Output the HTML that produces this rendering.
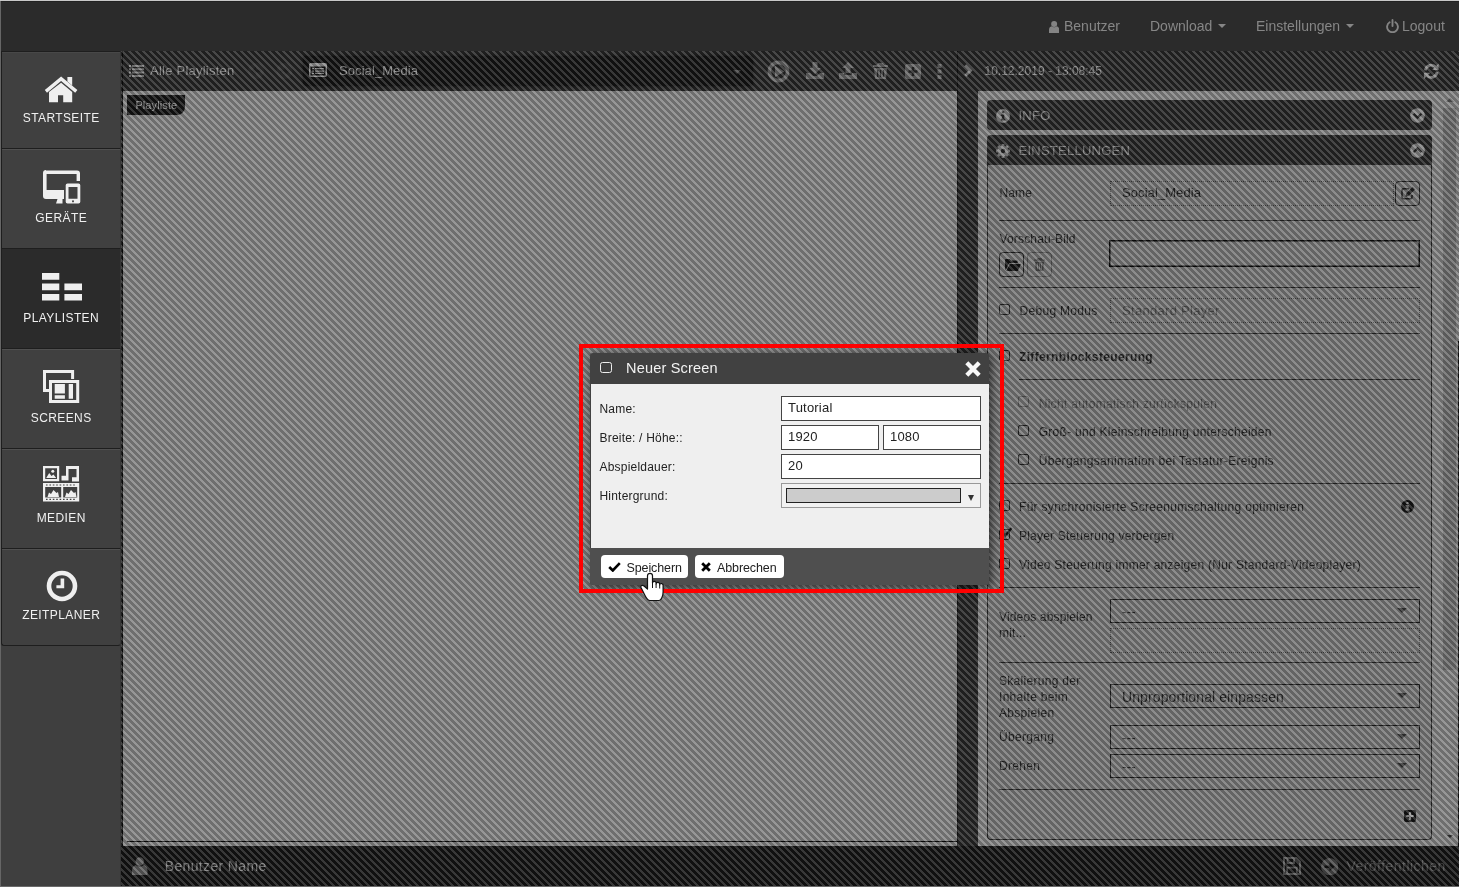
<!DOCTYPE html>
<html lang="de">
<head>
<meta charset="utf-8">
<title>Playlisten</title>
<style>
*{box-sizing:border-box;margin:0;padding:0}
html,body{width:1459px;height:887px;overflow:hidden}
body{position:relative;background:#2b2b2b;font-family:"Liberation Sans",sans-serif;font-size:13px;color:#222}
.abs{position:absolute}
#nav .it,.tile span,#dlg,#tb,#ptag,#bb,#rp{will-change:transform}
svg{display:block}
/* ---------- navbar ---------- */
#nav{position:absolute;left:0;top:0;width:1459px;height:51px;background:#2b2b2b;border-top:1px solid #c8c8c8;box-shadow:inset 0 1px 0 #222}
#nav .it{position:absolute;top:17px;font-size:14px;line-height:16px;color:#868686;white-space:nowrap}
#nav .car{display:inline-block;width:0;height:0;border-left:4px solid transparent;border-right:4px solid transparent;border-top:4px solid #868686;vertical-align:middle;margin-left:6px;position:relative;top:-1px}
/* ---------- sidebar ---------- */
#side{position:absolute;left:0;top:51px;width:121px;height:836px;background:#3f3f3f;border-left:1px solid #666;border-bottom:1px solid #666;border-right:1px solid #363636}
.tile{position:absolute;left:0;width:120px;height:100px;background:#404040;border-left:1px solid #1e1e1e;border-right:1px solid #363636;border-bottom:1px solid #1e1e1e;box-shadow:inset 0 1px 0 #505050;color:#f0f0f0;font-size:12px;letter-spacing:.4px}
.tile.act{background:#2b2b2b;box-shadow:none}
.tile span{position:absolute;left:0;right:0;text-align:center;top:61px;line-height:16px;text-indent:.4px}
.tile svg{position:absolute}
/* ---------- main ---------- */
#main{position:absolute;left:121px;top:51px;width:1338px;height:835px;background:#2e2e2e;overflow:hidden}
#hatch{position:absolute;left:121px;top:51px;z-index:50}
</style>
</head>
<body>
<div id="nav">
  <svg class="abs" style="left:1049px;top:20px" width="10.300" height="12" viewBox="0 0 11 13" preserveAspectRatio="none"><circle cx="5.500" cy="3.300" r="3.200" fill="#848484"/><path fill="#848484" d="M0 13V9.500C0 7.300 1.300 6 2.800 5.700c.7.700 1.700 1.100 2.700 1.100s2-.4 2.700-1.100C9.700 6 11 7.300 11 9.500V13z"/></svg>
  <div class="it" style="left:1063.500px">Benutzer</div>
  <div class="it" style="left:1149.500px">Download<i class="car"></i></div>
  <div class="it" style="left:1255.500px">Einstellungen<i class="car"></i></div>
  <svg class="abs" style="left:1386px;top:18px" width="13" height="14" viewBox="0 0 13 14"><path fill="none" stroke="#848484" stroke-width="1.900" stroke-linecap="round" d="M3.600 3.300A5.400 5.400 0 1 0 9.400 3.300M6.500 1v6"/></svg>
  <div class="it" style="left:1401.500px">Logout</div>
</div>

<div id="side">
  <div class="tile" style="top:0;height:98px;border-top:1px solid #1e1e1e;box-shadow:inset 0 1px 0 #484848"><span style="top:58px">STARTSEITE</span>
    <svg style="left:43px;top:24px;overflow:visible" width="33" height="27" viewBox="0 0 33 27"><g fill="#efefef"><path d="M16.100 .6L32.400 14.100l-2.200 2.600L16.100 5 2 16.700-.2 14.100z"/><path d="M22.400 1.100h4.800v8.400l-4.800-4z"/><path d="M16.100 6.700L27.200 15.900V26.200H18.200V19.200H13V26.200H4V15.900z"/></g></svg>
  </div>
  <div class="tile" style="top:98px"><span>GERÄTE</span>
    <svg style="left:39.500px;top:21px" width="40" height="34" viewBox="0 0 40 34"><path fill="#efefef" fill-rule="evenodd" d="M4 .5h31a3 3 0 0 1 3 3V11h-3.400V4H4.600v16H22v9h-1.500v4.500H14l1.500-4.500H4a3 3 0 0 1-3-3v-23a3 3 0 0 1 3-3z"/><path fill="#efefef" fill-rule="evenodd" d="M25.500 13.500h11a1.800 1.800 0 0 1 1.800 1.800v16.500a1.800 1.800 0 0 1-1.800 1.800h-11a1.800 1.800 0 0 1-1.800-1.800V15.300a1.800 1.800 0 0 1 1.800-1.800zM26.500 17v11.800h9V17zM31 30.200a1 1 0 1 0 .01 0z"/></svg>
  </div>
  <div class="tile act" style="top:198px"><span>PLAYLISTEN</span>
    <svg style="left:40px;top:24px" width="41" height="28" viewBox="0 0 41 28"><path fill="#efefef" d="M0 0h17.300v6.700H0zM0 10.500h17.300v6.700H0zM0 21h17.300v6.500H0zM22.400 10.500H40v6.700H22.400zM22.400 21H40v6.500H22.400z"/></svg>
  </div>
  <div class="tile" style="top:298px"><span>SCREENS</span>
    <svg style="left:41px;top:21px" width="38" height="34" viewBox="0 0 38 34"><g fill="none" stroke="#efefef" stroke-width="3"><path d="M29.600 9V1.500H1.500v19H6"/><rect x="7.500" y="11.500" width="27.200" height="20"/></g><path fill="#efefef" d="M11.700 14h10.200v9.400H11.700zM11.700 25.200h10.200v3.600H11.700zM25.700 14H30v14.800h-4.300z"/></svg>
  </div>
  <div class="tile" style="top:398px"><span>MEDIEN</span>
    <svg style="left:41px;top:17px" width="37" height="36" viewBox="0 0 37 36"><g fill="#efefef"><path fill-rule="evenodd" d="M0 0h16.200v15.300H0zM2.200 2.200v10.900H14V2.200z"/><path d="M3.200 12l3-5 2.300 3 2-1.500 2.700 3.500z"/><circle cx="9.800" cy="5.200" r="1.500"/><path d="M23 0h13v15.500h-7v-4.300h4.500V3H25.500v8.200h0V14.500h-7V9.700H23z"/><path fill-rule="evenodd" d="M0 17h36.200v18.500H0zM2.200 21v10.500h16V21zM20.200 21v10.500h14V21z"/><path d="M4.500 31l1.500-4.500 2 1.500 2.500-4 3 3 1.500-1 1 5zM22 31l1.500-4.500 2 1.500 2.500-4 3 3 1.500-1 1 5z"/></g><g fill="#404040"><path d="M3 18.400h1.600v1.200H3zM6.400 18.400H8v1.200H6.400zM9.800 18.400h1.600v1.200H9.800zM13.200 18.400h1.600v1.200h-1.600zM16.600 18.400h1.600v1.200h-1.600zM20 18.400h1.600v1.200H20zM23.400 18.400H25v1.200h-1.600zM26.800 18.400h1.600v1.200h-1.600zM30.200 18.400h1.600v1.200h-1.600zM3 32.800h1.600V34H3zM6.400 32.800H8V34H6.400zM9.800 32.800h1.600V34H9.800zM13.200 32.800h1.600V34h-1.600zM16.600 32.800h1.600V34h-1.600zM20 32.800h1.600V34H20zM23.400 32.800H25V34h-1.600zM26.800 32.800h1.600V34h-1.600zM30.200 32.800h1.600V34h-1.600z"/></g></svg>
  </div>
  <div class="tile" style="top:498px;height:97px;border-radius:0 0 3px 3px"><span style="top:58px">ZEITPLANER</span>
    <svg style="left:44px;top:21px" width="32" height="32" viewBox="0 0 32 32"><circle cx="16" cy="16" r="13" fill="none" stroke="#efefef" stroke-width="4.600"/><path fill="#efefef" d="M14.600 8.400h3.600v9.900H10.400v-3.100h4.200z"/></svg>
  </div>
</div>

<div id="main">

<style>
#tb{z-index:3;position:absolute;left:0;top:0;width:1338px;height:40px;color:#d6d6d6;font-size:13px}
#tb .t{position:absolute;white-space:nowrap;line-height:16px}
#sel{position:absolute;left:182px;top:5px;width:450px;height:30px;background:#111;border-radius:3px;box-shadow:0 0 2px 1px #1c1c1c}
#canvas{position:absolute;left:1px;top:40px;width:836px;height:755px;background:#ccc;border-left:1px solid #000}
#ptag{position:absolute;left:6px;top:44px;width:58px;height:20px;background:#111;border-bottom-right-radius:8px;color:#e4e4e4;font-size:11px;line-height:20px;padding-left:8.400px;letter-spacing:.1px}
#divd{position:absolute;left:836px;top:0;width:21px;height:795px;background:#2e2e2e;border-left:1px solid #0c0c0c}
#bb{position:absolute;left:0;top:795px;width:1338px;height:40px;background:#111;color:#aaa}
#rp{position:absolute;left:857px;top:40px;width:481px;height:755px;background:#cdcdcd}
</style>
<div id="canvas"><div class="abs" style="left:4px;top:750px;width:840px;height:1px;background:#000"></div></div>
<div id="ptag">Playliste</div>
<div id="tb">
  <svg class="abs" style="left:8px;top:14px" width="15" height="12" viewBox="0 0 15 12"><path fill="#c4c4c4" d="M0 0h2v2H0zM3 0h12v2H3zM0 3.3h2v2H0zM3 3.3h12v2H3zM0 6.6h2v2H0zM3 6.6h12v2H3zM0 9.9h2v2H0zM3 9.9h12v2H3z"/></svg>
  <div class="t" style="left:29px;top:12px;letter-spacing:.24px">Alle Playlisten</div>
  <svg class="abs" style="left:126px;top:12px" width="46" height="16" viewBox="0 0 46 16"><g fill="#3d3d3d"><circle cx="9" cy="8" r="8"/><circle cx="37.500" cy="8" r="8"/></g><path fill="#2a2a2a" d="M13.500 6.800H9V3.800L4.200 8 9 12.200V9.200h4.500zM33 6.800h4.500V3.800L42.300 8l-4.800 4.200V9.200H33z"/></svg>
  <div id="sel">
    <svg class="abs" style="left:6px;top:7px" width="18" height="14" viewBox="0 0 18 14"><rect x=".75" y=".75" width="16.5" height="12.5" rx="1" fill="none" stroke="#ddd" stroke-width="1.5"/><path fill="#ddd" d="M1 1h16v2.5H1zM3 5h2v1.3H3zM6 5h9v1.3H6zM3 7.4h2v1.3H3zM6 7.4h9v1.3H6zM3 9.8h2v1.3H3zM6 9.8h9v1.3H6z"/></svg>
    <div class="t" style="left:36px;top:7px;letter-spacing:.08px">Social_Media</div>
    <div class="abs" style="left:430px;top:14px;border-left:4px solid transparent;border-right:4px solid transparent;border-top:4px solid #666"></div>
  </div>
  <!-- action icons -->
  <svg class="abs" style="left:646px;top:9px" width="23" height="23" viewBox="0 0 23 23"><circle cx="11.500" cy="11.500" r="9.100" fill="none" stroke="#999" stroke-width="3.600"/><path fill="#999" d="M8 5.800l9.300 5.700L8 17.200z"/></svg>
  <svg class="abs" style="left:685px;top:11px" width="18" height="17" viewBox="0 0 18 17"><path fill="#999" d="M6.5 0h5v6h3.5L9 12 3 6h3.5zM0 11h4l3 3h4l3-3h4v6H0z"/></svg>
  <svg class="abs" style="left:718px;top:11px" width="18" height="17" viewBox="0 0 18 17"><path fill="#999" d="M9 0l6 6h-3.5v5h-5V6H3zM0 11h5v2h8v-2h5v6H0z"/></svg>
  <svg class="abs" style="left:752px;top:12px" width="15" height="16" viewBox="0 0 15 16"><path fill="#999" d="M5 0h5l1 2h4v2H0V2h4zM1 5h13l-1 11H2zM4 7v7h1.3V7zM6.9 7v7h1.3V7zM9.8 7v7h1.3V7z" fill-rule="evenodd"/></svg>
  <svg class="abs" style="left:784px;top:13px" width="16" height="15" viewBox="0 0 16 15"><path fill="#999" fill-rule="evenodd" d="M2.5 0h11A2.5 2.5 0 0 1 16 2.500v10a2.500 2.500 0 0 1-2.500 2.500h-11A2.500 2.500 0 0 1 0 12.500v-10A2.500 2.500 0 0 1 2.500 0zM6.700 3v3.200H3.500v2.600h3.200V12h2.600V8.800h3.200V6.200H9.300V3z"/></svg>
  <svg class="abs" style="left:816px;top:13px" width="5" height="15" viewBox="0 0 5 15"><path fill="#999" d="M.5 0h4v4h-4zM.5 5.500h4v4h-4zM.5 11h4v4h-4z"/></svg>
  <svg class="abs" style="left:842.500px;top:13px" width="9" height="13" viewBox="0 0 9 13"><path fill="none" stroke="#c8c8c8" stroke-width="2.800" d="M1.300 1.200l5.300 5.300L1.300 11.800"/></svg>
  <div class="t" style="left:863.500px;top:11.500px;font-size:12px;color:#d4d4d4;letter-spacing:0">10.12.2019 - 13:08:45</div>
  <svg class="abs" style="left:1302px;top:11.500px" width="16.500" height="16.500" viewBox="0 0 18 18"><g fill="none" stroke="#d8d8d8" stroke-width="3"><path d="M2.600 8A6.500 6.500 0 0 1 14 4.600"/><path d="M15.400 10A6.500 6.500 0 0 1 4 13.400"/></g><path fill="#d8d8d8" d="M17 .5v7h-7zM1 17.500v-7h7z"/></svg>
</div>
<div id="divd"></div>
<div class="abs" style="left:1px;top:0;width:1px;height:795px;background:#000;z-index:4"></div>
<div id="bb">
  <svg class="abs" style="left:11px;top:11px" width="15.500" height="18" viewBox="0 0 16 18" preserveAspectRatio="none"><circle cx="8" cy="4.500" r="4.300" fill="#8a8a8a"/><path fill="#8a8a8a" d="M0 18v-4.500c0-3 2-5 4-5.500 1 1 2.500 1.500 4 1.500s3-.5 4-1.500c2 .5 4 2.500 4 5.500V18z"/></svg>
  <div class="abs" style="left:43.700px;top:10.500px;font-size:14px;line-height:18px;color:#c0c0c0;letter-spacing:.36px;white-space:nowrap">Benutzer Name</div>
  <svg class="abs" style="left:1162px;top:11px" width="18" height="18" viewBox="0 0 18 18"><path fill="none" stroke="#808080" stroke-width="2" d="M1 1h12.300L17 4.700V17H1z"/><path fill="none" stroke="#808080" stroke-width="1.800" d="M4.500 1v5h6.500V1M4.200 17v-6.300h9.600V17"/></svg>
  <svg class="abs" style="left:1199.500px;top:11.500px" width="17.500" height="17.500" viewBox="0 0 18 18"><circle cx="9" cy="9" r="9" fill="#6a6a6a"/><path fill="#111" d="M3.500 7.600h5.300V4.300L14 9l-5.200 4.700v-3.300H3.500z"/></svg>
  <div class="abs" style="left:1225.400px;top:10.500px;font-size:14px;line-height:18px;color:#6a6a6a;letter-spacing:.47px;white-space:nowrap">Veröffentlichen</div>
</div>
<div id="rp">

<style>
#rp{font-size:12px;color:#222}
#rp .hd{position:absolute;left:9px;width:445px;height:30px;background:#2e2e2e;border-radius:4px;color:#c2c2c2;font-size:13px}
#rp .hd b{position:absolute;left:31.500px;top:7.500px;line-height:16px;font-weight:normal;letter-spacing:.25px;white-space:nowrap}
#pbody{position:absolute;left:9px;top:74px;width:445px;height:675px;border:1px solid #2a2a2a;border-top:0;border-radius:0 0 4px 4px;background:#b8b8b8}
#rp .l{position:absolute;white-space:nowrap;line-height:16px;letter-spacing:.3px}
#rp .hr{position:absolute;height:1px;background:#2a2a2a;left:21px;width:421px}
#rp .cb{position:absolute;width:11px;height:11px;border:1px solid #222;border-radius:2px}
#rp .dot{position:absolute;border:1px dotted #555;left:132px;width:310px;height:25px}
#rp .sb{position:absolute;border:1px solid #1a1a1a;left:132px;width:310px;height:24px}
#rp .sb i{position:absolute;right:12px;top:8px;border-left:5px solid transparent;border-right:5px solid transparent;border-top:5px solid #444}
#rp .v{position:absolute;left:144px;font-size:13px;line-height:16px;white-space:nowrap;letter-spacing:.3px}
#rp .btn{position:absolute;width:25px;height:25px;border:1px solid #222;border-radius:4px}
#sbar{position:absolute;left:465px;top:0;width:16px;height:755px}
#sbar u{position:absolute;left:0;top:17px;width:13px;height:562px;background:#a4a4a4}
</style>
<div class="hd" style="top:9px">
  <svg class="abs" style="left:9px;top:9px" width="14" height="14" viewBox="0 0 14 14"><circle cx="7" cy="7" r="7" fill="#ccc"/><path fill="#2e2e2e" d="M5.800 2.200h2.400v2.100H5.800zM4.900 5.500h3.400v4.300h1v1.600H4.900V9.800h1V7.100h-1z"/></svg>
  <b>INFO</b>
  <svg class="abs" style="left:423px;top:8px" width="15" height="15" viewBox="0 0 15 15"><circle cx="7.500" cy="7.500" r="7.300" fill="#ccc"/><path fill="none" stroke="#2e2e2e" stroke-width="2.200" d="M3.600 5.700l3.900 3.900 3.900-3.900"/></svg>
</div>
<div class="hd" style="top:44px;height:31px;border-radius:4px 4px 0 0">
  <svg class="abs" style="left:9px;top:9px" width="14" height="14" viewBox="0 0 14 14"><g fill="#ccc"><circle cx="7" cy="7" r="5.200"/><rect x="5.600" y="0" width="2.800" height="14" rx=".6"/><rect x="5.600" y="0" width="2.800" height="14" rx=".6" transform="rotate(45 7 7)"/><rect x="5.600" y="0" width="2.800" height="14" rx=".6" transform="rotate(90 7 7)"/><rect x="5.600" y="0" width="2.800" height="14" rx=".6" transform="rotate(135 7 7)"/></g><circle cx="7" cy="7" r="2.200" fill="#2e2e2e"/></svg>
  <b>EINSTELLUNGEN</b>
  <svg class="abs" style="left:423px;top:8px" width="15" height="15" viewBox="0 0 15 15"><circle cx="7.500" cy="7.500" r="7.300" fill="#ccc"/><path fill="none" stroke="#2e2e2e" stroke-width="2.200" d="M3.600 9.300l3.900-3.900 3.900 3.900"/></svg>
</div>
<div id="pbody"></div>

<div class="l" style="left:21.500px;top:93.500px;letter-spacing:.1px">Name</div>
<div class="dot" style="top:90px;width:284px"></div>
<div class="v" style="top:94px;letter-spacing:.08px">Social_Media</div>
<div class="btn" style="left:417px;top:90px"><svg class="abs" style="left:5px;top:5px" width="14" height="13" viewBox="0 0 14 13"><path fill="none" stroke="#222" stroke-width="1.500" d="M8 1.800H2.500a1.500 1.500 0 0 0-1.500 1.500v7a1.500 1.500 0 0 0 1.500 1.500h7a1.500 1.500 0 0 0 1.500-1.500V8"/><path fill="#222" d="M11.500 0L14 2.500 7.500 9 4.500 9.800 5.200 6.500z"/></svg></div>
<div class="hr" style="top:129px"></div>

<div class="l" style="left:21.500px;top:140px;letter-spacing:.16px">Vorschau-Bild</div>
<div class="btn" style="left:21px;top:161px;width:25px;height:25px"><svg class="abs" style="left:5px;top:6px" width="16" height="12" viewBox="0 0 16 12"><path fill="#111" d="M0 1.200C0 .5.500 0 1.200 0h3.600l1.400 1.600h5.300c.7 0 1.200.5 1.200 1.200V4H4.300L1 10.500 0 10.800zM4.800 5H16l-3.200 7H1.200z"/></svg></div>
<div class="btn" style="left:49px;top:161px;width:25px;height:25px;border-color:#777"><svg class="abs" style="left:6px;top:5px" width="11" height="13" viewBox="0 0 11 13"><path fill="#666" fill-rule="evenodd" d="M3.500 0h4l.8 1.500H11v1.300H0V1.500h2.700zM1 3.800h9L9.300 13H1.700zM3 5.300v6h1v-6zM5 5.300v6h1v-6zM7 5.300v6h1v-6z"/></svg></div>
<div class="abs" style="left:131px;top:149px;width:311px;height:27px;border:1px solid #000;box-shadow:inset 0 0 0 .5px #000"></div>
<div class="hr" style="top:196px"></div>

<div class="cb" style="left:21px;top:213px"></div>
<div class="l" style="left:41.500px;top:211.500px">Debug Modus</div>
<div class="dot" style="top:207px"></div>
<div class="v" style="top:212px;color:#696969">Standard Player</div>
<div class="hr" style="top:242px"></div>

<div class="cb" style="left:21px;top:259px"></div>
<div class="l" style="left:41px;top:258px;font-weight:bold;letter-spacing:.35px">Ziffernblocksteuerung</div>
<div class="hr" style="top:288px;left:41px;width:401px"></div>
<div class="cb" style="left:40px;top:305px;border-color:#777"></div>
<div class="l" style="left:60.700px;top:304.500px;color:#666">Nicht automatisch zurückspulen</div>
<div class="cb" style="left:40px;top:334px"></div>
<div class="l" style="left:60.700px;top:333px;letter-spacing:.28px">Groß- und Kleinschreibung unterscheiden</div>
<div class="cb" style="left:40px;top:363px"></div>
<div class="l" style="left:60.700px;top:362px">Übergangsanimation bei Tastatur-Ereignis</div>
<div class="hr" style="top:392px"></div>

<div class="cb" style="left:21px;top:409px"></div>
<div class="l" style="left:41px;top:408px">Für synchronisierte Screenumschaltung optimieren</div>
<svg class="abs" style="left:423px;top:409px" width="13" height="13" viewBox="0 0 14 14"><circle cx="7" cy="7" r="7" fill="#111"/><path fill="#b8b8b8" d="M5.800 2.200h2.400v2.100H5.800zM4.900 5.500h3.400v4.300h1v1.600H4.900V9.800h1V7.100h-1z"/></svg>
<div class="cb" style="left:21px;top:438px"></div>
<svg class="abs" style="left:22px;top:435px" width="13" height="13" viewBox="0 0 13 13"><path fill="none" stroke="#111" stroke-width="2.200" d="M2.500 6.500l3 3L11.500 2"/></svg>
<div class="l" style="left:41px;top:437px;letter-spacing:.2px">Player Steuerung verbergen</div>
<div class="cb" style="left:21px;top:467px"></div>
<div class="l" style="left:41px;top:466px;letter-spacing:.25px">Video Steuerung immer anzeigen (Nur Standard-Videoplayer)</div>
<div class="hr" style="top:496px"></div>

<div class="l" style="left:21px;top:518px;letter-spacing:.15px">Videos abspielen<br>mit...</div>
<div class="sb" style="top:508px"><i></i></div>
<div class="v" style="top:513px">---</div>
<div class="dot" style="top:537px"></div>
<div class="hr" style="top:571px"></div>

<div class="l" style="left:21px;top:582px">Skalierung der<br>Inhalte beim<br>Abspielen</div>
<div class="sb" style="top:593px"><i></i></div>
<div class="v" style="top:598px;font-size:14px;letter-spacing:.1px">Unproportional einpassen</div>
<div class="l" style="left:21px;top:638px">Übergang</div>
<div class="sb" style="top:634px"><i></i></div>
<div class="v" style="top:639px">---</div>
<div class="l" style="left:21px;top:667px">Drehen</div>
<div class="sb" style="top:663px"><i></i></div>
<div class="v" style="top:668px">---</div>
<div class="hr" style="top:698px"></div>
<svg class="abs" style="left:426px;top:719px" width="12" height="12" viewBox="0 0 16 15" preserveAspectRatio="none"><path fill="#111" fill-rule="evenodd" d="M2.500 0h11A2.500 2.500 0 0 1 16 2.500v10a2.500 2.500 0 0 1-2.500 2.500h-11A2.500 2.500 0 0 1 0 12.500v-10A2.500 2.500 0 0 1 2.500 0zM6.700 3v3.200H3.500v2.600h3.200V12h2.600V8.800h3.200V6.200H9.300V3z"/><path fill="#ededed" d="M6.500 2.800v3.300H3.300v2.800h3.200v3.300h3V8.900h3.200V6.100H9.500V2.800z"/></svg>

<div id="sbar"><u></u>
  <div class="abs" style="left:3px;top:7px;border-left:4px solid transparent;border-right:4px solid transparent;border-bottom:4px solid #7a7a7a"></div>
  <div class="abs" style="left:3.500px;top:744px;border-left:3.500px solid transparent;border-right:3.500px solid transparent;border-top:3.500px solid #404040"></div>
  <div class="abs" style="left:15px;top:250px;width:1px;height:505px;background:#050505"></div>
</div>

</div>

</div>

<svg id="hatch" width="1338" height="835" shape-rendering="crispEdges">
  <defs>
    <pattern id="hp" width="7" height="7" patternUnits="userSpaceOnUse">
      <rect width="7" height="7" fill="#101010"/>
      <path fill="#606060" d="M0 0h3v1h-3zM1 1h3v1h-3zM2 2h3v1h-3zM3 3h3v1h-3zM4 4h3v1h-3zM5 5h2v1h-2zM0 5h1v1h-1zM6 6h1v1h-1zM0 6h2v1h-2z"/>
    </pattern>
  </defs>
  <rect width="1338" height="835" fill="url(#hp)" opacity=".5"/>
</svg>


<style>
#red{position:absolute;left:579px;top:344px;width:425px;height:249px;border:4px solid #fe0000;z-index:70}
#dlg{position:absolute;left:590px;top:353px;width:399px;height:232px;background:#414141;border-radius:3px;z-index:60;box-shadow:2px 2px 8px 1px rgba(0,0,0,.55);font-size:12px;color:#222}
#dlg .bd{position:absolute;left:1px;top:31px;width:398px;height:164px;background:#efefef}
#dlg .ft{position:absolute;left:0;top:195px;width:399px;height:37px;background:#4f4f4f;border-radius:0 0 3px 3px}
#dlg .lb{position:absolute;left:8.500px;line-height:16px;white-space:nowrap;letter-spacing:.2px;margin-top:1px}
#dlg .in{position:absolute;left:191px;width:200px;height:25px;background:#fff;border:1px solid #444;font-size:13px;line-height:22px;padding-left:6px;letter-spacing:.2px}
#dlg .bt{position:absolute;top:202px;height:23px;background:#fff;border-radius:4px;font-size:13px;line-height:23px;color:#222;white-space:nowrap}
</style>
<div id="dlg">
  <div class="abs" style="left:10px;top:9px;width:12px;height:11px;border:1.500px solid #eee;border-radius:2.500px"></div>
  <div class="abs" style="left:36px;top:6px;font-size:14.500px;line-height:18px;color:#f2f2f2;letter-spacing:.2px;white-space:nowrap">Neuer Screen</div>
  <svg class="abs" style="left:375px;top:8px" width="16" height="16" viewBox="0 0 16 16"><path fill="none" stroke="#f8f8f8" stroke-width="4.300" d="M1.800 1.800l12.400 12.400M14.200 1.800L1.800 14.200"/></svg>
  <div class="bd">
    <div class="lb" style="top:16px">Name:</div>
    <div class="in" style="left:190px;top:12px">Tutorial</div>
    <div class="lb" style="top:45px">Breite: / Höhe::</div>
    <div class="in" style="left:190px;top:41px;width:98px">1920</div>
    <div class="in" style="left:292px;top:41px;width:98px">1080</div>
    <div class="lb" style="top:74px">Abspieldauer:</div>
    <div class="in" style="left:190px;top:70px">20</div>
    <div class="lb" style="top:103px">Hintergrund:</div>
    <div class="abs" style="left:190px;top:99px;width:200px;height:25px;border:1px solid #999;background:#f1f1f1">
      <div class="abs" style="left:4px;top:4px;width:175px;height:15px;background:#ccc;border:1px solid #222"></div>
      <div class="abs" style="left:185.500px;top:11px;border-left:3.600px solid transparent;border-right:3.600px solid transparent;border-top:6.500px solid #333"></div>
    </div>
  </div>
  <div class="ft"></div>
  <div class="bt" style="left:11px;width:87px"><svg class="abs" style="left:7px;top:7px" width="13" height="10" viewBox="0 0 13 10"><path fill="none" stroke="#000" stroke-width="2.600" d="M1.200 5l3.600 3.500L11.800 1.200"/></svg><span class="abs" style="left:25.500px;top:1.500px;font-size:12.500px;letter-spacing:-.1px">Speichern</span></div>
  <div class="bt" style="left:105px;width:89px"><svg class="abs" style="left:6px;top:7px" width="10" height="10" viewBox="0 0 10 10"><path fill="none" stroke="#000" stroke-width="2.800" d="M1.200 1.200l7.600 7.600M8.800 1.200L1.200 8.800"/></svg><span class="abs" style="left:22px;top:1.500px;font-size:12.500px;letter-spacing:-.1px">Abbrechen</span></div>
</div>
<div id="red"></div>
<div class="abs" style="left:0;top:1px;width:1px;height:886px;background:#666;z-index:90"></div>
<div class="abs" style="left:0;top:886px;width:1459px;height:1px;background:#6a6a6a;z-index:90"></div>
<svg class="abs" style="left:639px;top:572px;z-index:80" width="26" height="30" viewBox="0 0 26 30"><path fill="#fff" stroke="#111" stroke-width="1.200" stroke-linejoin="round" d="M8.500 15.500V3.800a2.500 2.500 0 0 1 5 0V11a1.800 1.800 0 0 1 3.600 .3V12a1.800 1.800 0 0 1 3.600 .4V13a1.700 1.700 0 0 1 3.400 .5V20c0 4-2 8.500-4 8.500H11c-2 0-3.500-2-5-5L2 15.500c-.8-1.800 1.500-3 3-1.500L8.500 17z"/><path fill="none" stroke="#111" stroke-width="1" d="M13.500 11v5M17.100 12v4M20.700 13v3.500"/></svg>

</body>
</html>
